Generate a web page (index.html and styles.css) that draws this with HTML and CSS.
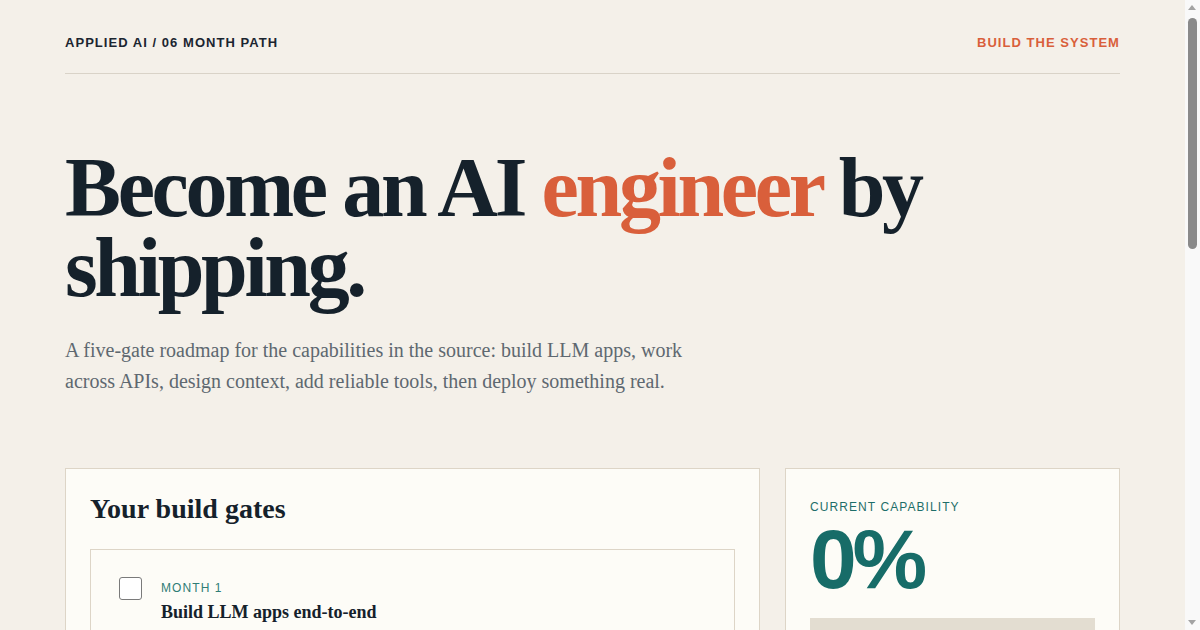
FILE: index.html
```html
<!DOCTYPE html>
<html lang="en">
<head>
<meta charset="utf-8">
<title>Applied AI / 06 Month Path</title>
<link rel="stylesheet" href="styles.css">
</head>
<body>
<div class="page">
  <header class="topbar">
    <span class="brand">APPLIED AI / 06 MONTH PATH</span>
    <span class="tagline">BUILD THE SYSTEM</span>
  </header>

  <section class="hero">
    <h1 class="headline">Become an AI <span class="accent">engineer</span> by shipping.</h1>
    <p class="lede">A five-gate roadmap for the capabilities in the source: build LLM apps, work across APIs, design context, add reliable tools, then deploy something real.</p>
  </section>

  <section class="board">
    <div class="card gates">
      <h2 class="card-title">Your build gates</h2>
      <div class="gate-list">
        <label class="gate">
          <input type="checkbox" class="check">
          <span class="gate-body">
            <span class="gate-month">MONTH 1</span>
            <span class="gate-name">Build LLM apps end-to-end</span>
            <span class="gate-desc">Ship a small assistant with prompts, streaming output and a clean interface.</span>
          </span>
        </label>
        <label class="gate">
          <input type="checkbox" class="check">
          <span class="gate-body">
            <span class="gate-month">MONTH 2</span>
            <span class="gate-name">Work across model APIs</span>
            <span class="gate-desc">Swap providers, compare outputs and handle rate limits and errors.</span>
          </span>
        </label>
        <label class="gate">
          <input type="checkbox" class="check">
          <span class="gate-body">
            <span class="gate-month">MONTH 3</span>
            <span class="gate-name">Design context and retrieval</span>
            <span class="gate-desc">Chunk, embed and retrieve the right information for every request.</span>
          </span>
        </label>
        <label class="gate">
          <input type="checkbox" class="check">
          <span class="gate-body">
            <span class="gate-month">MONTH 4–5</span>
            <span class="gate-name">Add reliable tools</span>
            <span class="gate-desc">Give the model functions, validate calls and evaluate the results.</span>
          </span>
        </label>
        <label class="gate">
          <input type="checkbox" class="check">
          <span class="gate-body">
            <span class="gate-month">MONTH 6</span>
            <span class="gate-name">Deploy something real</span>
            <span class="gate-desc">Put it in front of users with logging, monitoring and cost controls.</span>
          </span>
        </label>
      </div>
    </div>

    <aside class="card status">
      <span class="status-label">CURRENT CAPABILITY</span>
      <span class="status-value">0%</span>
      <div class="meter"><div class="meter-fill" style="width:0%"></div></div>
      <p class="status-note">0 of 5 gates cleared. Check a gate when you have shipped it.</p>
    </aside>
  </section>
</div>

<div class="scrollbar" aria-hidden="true">
  <span class="sb-arrow sb-up"></span>
  <span class="sb-thumb"></span>
  <span class="sb-arrow sb-down"></span>
</div>
</body>
</html>
```

FILE: styles.css
```css
* { box-sizing: border-box; }

html, body {
  margin: 0;
  padding: 0;
  background: #f4f0e9;
}

body {
  font-family: "Liberation Serif", "Times New Roman", serif;
  color: #15212b;
}

.page {
  padding: 0 80px 80px 65px;
}

.topbar {
  display: flex;
  justify-content: space-between;
  align-items: center;
  padding: 35px 0 22px;
  border-bottom: 1px solid #d9d3c8;
  font-family: "Liberation Sans", Arial, sans-serif;
  font-size: 13px;
  line-height: 16px;
  font-weight: 700;
  letter-spacing: 0.08em;
}

.brand { color: #1b2530; }
.tagline { color: #d95f3b; }

.hero {
  padding-top: 74px;
}

.headline {
  margin: 0;
  font-family: "Liberation Serif", "Times New Roman", serif;
  font-weight: 700;
  font-size: 84px;
  line-height: 80px;
  letter-spacing: -0.04em;
  color: #15212b;
  max-width: 960px;
}

.accent { color: #d95f3b; }

.lede {
  margin: 27px 0 0;
  max-width: 640px;
  font-size: 20px;
  line-height: 31px;
  color: #5e6870;
}

.board {
  margin-top: 71px;
  display: grid;
  grid-template-columns: minmax(0, 1fr) 335px;
  gap: 25px;
  align-items: start;
}

.card {
  background: #fdfcf7;
  border: 1px solid #ddd5c7;
}

.gates {
  padding: 23px 24px 24px;
}

.card-title {
  margin: 0 0 23px;
  font-size: 28px;
  line-height: 34px;
  font-weight: 700;
  color: #15212b;
}

.gate-list {
  display: flex;
  flex-direction: column;
  gap: 14px;
}

.gate {
  display: flex;
  gap: 19px;
  align-items: flex-start;
  padding: 27px 28px 26px;
  border: 1px solid #ddd5c7;
  background: #fdfcf7;
}

.check {
  appearance: none;
  -webkit-appearance: none;
  margin: 0;
  flex: 0 0 auto;
  width: 23px;
  height: 23px;
  border: 1px solid #7a7a7a;
  border-radius: 3px;
  background: #ffffff;
}

.gate-body {
  display: flex;
  flex-direction: column;
  gap: 5px;
  padding-top: 3px;
}

.gate-month {
  font-family: "Liberation Sans", Arial, sans-serif;
  font-size: 12px;
  line-height: 16px;
  letter-spacing: 0.09em;
  color: #2f7d76;
}

.gate-name {
  font-size: 18px;
  line-height: 22px;
  font-weight: 700;
  color: #15212b;
}

.gate-desc {
  margin-top: 4px;
  font-size: 16px;
  line-height: 24px;
  color: #5e6870;
}

.status {
  padding: 30px 24px 28px;
  display: flex;
  flex-direction: column;
}

.status-label {
  font-family: "Liberation Sans", Arial, sans-serif;
  font-size: 12px;
  line-height: 16px;
  letter-spacing: 0.09em;
  color: #1e6e69;
}

.status-value {
  margin-top: -1px;
  font-family: "Liberation Sans", Arial, sans-serif;
  font-weight: 700;
  font-size: 84px;
  line-height: 90px;
  letter-spacing: -0.05em;
  color: #176c68;
}

.meter {
  margin-top: 14px;
  height: 12px;
  background: #e3ddd1;
}

.meter-fill {
  height: 100%;
  background: #176c68;
}

.status-note {
  margin: 16px 0 0;
  font-size: 16px;
  line-height: 24px;
  color: #5e6870;
}

/* simulated browser scrollbar */
.scrollbar {
  position: fixed;
  top: 0;
  right: 0;
  width: 15px;
  height: 100vh;
  background: #f9f9f9;
  display: flex;
  flex-direction: column;
  align-items: center;
}

.sb-arrow {
  flex: 0 0 15px;
  width: 15px;
  position: relative;
}

.sb-arrow::before {
  content: "";
  position: absolute;
  left: 3px;
  top: 5px;
  border-left: 4.5px solid transparent;
  border-right: 4.5px solid transparent;
}

.sb-up::before { border-bottom: 5px solid #a3a3a3; }
.sb-down::before { border-top: 5px solid #a3a3a3; }

.sb-thumb {
  margin-top: 3px;
  width: 9px;
  height: 231px;
  border-radius: 5px;
  background: #8a8a8a;
}

.sb-down {
  margin-top: auto;
}
```
